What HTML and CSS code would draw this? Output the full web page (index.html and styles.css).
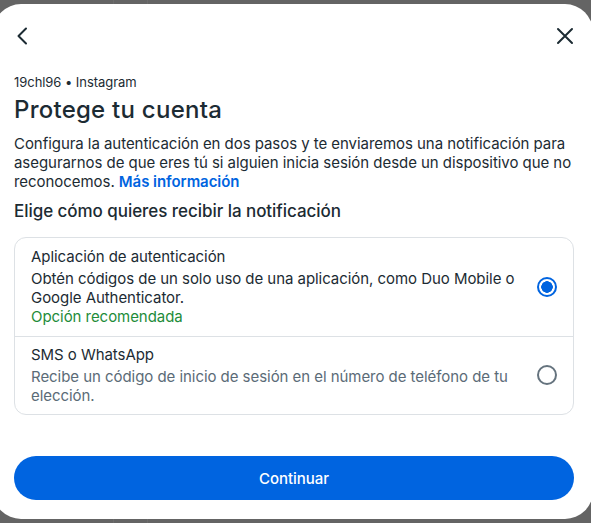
FILE: index.html
```html
<!DOCTYPE html>
<html lang="es">
<head>
<meta charset="utf-8">
<title>Protege tu cuenta</title>
<link rel="stylesheet" href="styles.css">
</head>
<body>
<div class="backdrop">
  <div class="modal">
    <div class="modal-header">
      <button class="icon-btn back" aria-label="Atrás">
        <svg width="24" height="24" viewBox="0 0 24 24"><polyline points="16 4.5 8.5 12 16 19.5" fill="none" stroke="#1c2b33" stroke-width="2" stroke-linecap="round" stroke-linejoin="round"/></svg>
      </button>
      <button class="icon-btn close" aria-label="Cerrar">
        <svg width="24" height="24" viewBox="0 0 24 24"><path d="M5 5 L19 19 M19 5 L5 19" fill="none" stroke="#1c2b33" stroke-width="2" stroke-linecap="round"/></svg>
      </button>
    </div>
    <div class="meta">19chl96 • Instagram</div>
    <h1 class="title">Protege tu cuenta</h1>
    <p class="intro">Configura la autenticación en dos pasos y te enviaremos una notificación para asegurarnos de que eres tú si alguien inicia sesión desde un dispositivo que no reconocemos. <a class="link" href="#">Más información</a></p>
    <h2 class="subtitle">Elige cómo quieres recibir la notificación</h2>
    <div class="options">
      <label class="option">
        <div class="option-text">
          <div class="option-title">Aplicación de autenticación</div>
          <div class="option-desc dark">Obtén códigos de un solo uso de una aplicación, como Duo Mobile o Google Authenticator.</div>
          <div class="option-rec">Opción recomendada</div>
        </div>
        <span class="radio checked"></span>
      </label>
      <label class="option">
        <div class="option-text">
          <div class="option-title">SMS o WhatsApp</div>
          <div class="option-desc">Recibe un código de inicio de sesión en el número de teléfono de tu elección.</div>
        </div>
        <span class="radio"></span>
      </label>
    </div>
    <button class="primary">Continuar</button>
  </div>
</div>
</body>
</html>
```
FILE: styles.css
```css
* { box-sizing: border-box; }

html, body {
  margin: 0;
  padding: 0;
  height: 523px;
  overflow: hidden;
}

body {
  font-family: Inter, "Noto Sans", sans-serif;
  letter-spacing: -0.05px;
  color: #1c2b33;
  background-color: #646464;
  background-image:
    linear-gradient(to right, transparent 113px, #6c6c6c 113px, #6c6c6c 114px, transparent 114px),
    linear-gradient(to right, transparent 147px, #6c6c6c 147px, #6c6c6c 148px, transparent 148px);
}

.backdrop {
  padding-top: 4px;
}

.modal {
  margin-left: -7px;
  width: 600px;
  height: 515px;
  background: #ffffff;
  border-radius: 28px;
  padding: 20px 19px 19px 21px;
  display: flex;
  flex-direction: column;
}

.modal-header {
  display: flex;
  justify-content: space-between;
  align-items: center;
  height: 24px;
}

.icon-btn {
  border: 0;
  padding: 0;
  background: none;
  width: 24px;
  height: 24px;
  display: block;
}
.icon-btn svg { display: block; }
.back { margin-left: -4px; }
.close { margin-right: -3px; }

.meta {
  margin-top: 26px;
  font-size: 13px;
  line-height: 16px;
}

.title {
  margin: 5px 0 0;
  font-size: 24px;
  line-height: 29px;
  font-weight: 500;
  letter-spacing: 0.25px;
}

.intro {
  margin: 10px 0 0;
  font-size: 15px;
  line-height: 19px;
}

.link {
  color: #0064e0;
  font-weight: 600;
  text-decoration: none;
}

.subtitle {
  margin: 9px 0 0;
  font-size: 17px;
  line-height: 22px;
  font-weight: 500;
}

.options {
  margin-top: 15px;
  border: 1px solid #dde1e5;
  border-radius: 12px;
}

.option {
  display: flex;
  align-items: center;
  gap: 16px;
  padding: 9px 16px 10px 16px;
}
.option + .option {
  border-top: 1px solid #dde1e5;
  padding-top: 8px;
  padding-bottom: 9px;
}

.option-text {
  flex: 1;
  font-size: 15px;
}

.option-title {
  line-height: 20px;
}

.option-desc {
  margin-top: 2px;
  line-height: 19px;
  color: #5b6b77;
}
.option-desc.dark { color: #1c2b33; }

.option-rec {
  line-height: 19px;
  color: #1e8c3a;
}

.radio {
  flex: none;
  width: 20px;
  height: 20px;
  border-radius: 50%;
  border: 2px solid #65737e;
  background: #ffffff;
}
.radio.checked {
  border-color: #0064e0;
  background: radial-gradient(circle, #0064e0 0 5.5px, #ffffff 6px);
}

.primary {
  margin-top: auto;
  height: 44px;
  border: 0;
  border-radius: 22px;
  background: #0064e0;
  color: #ffffff;
  font-family: Inter, "Noto Sans", sans-serif;
  font-size: 15px;
  font-weight: 500;
  letter-spacing: -0.05px;
}
```
